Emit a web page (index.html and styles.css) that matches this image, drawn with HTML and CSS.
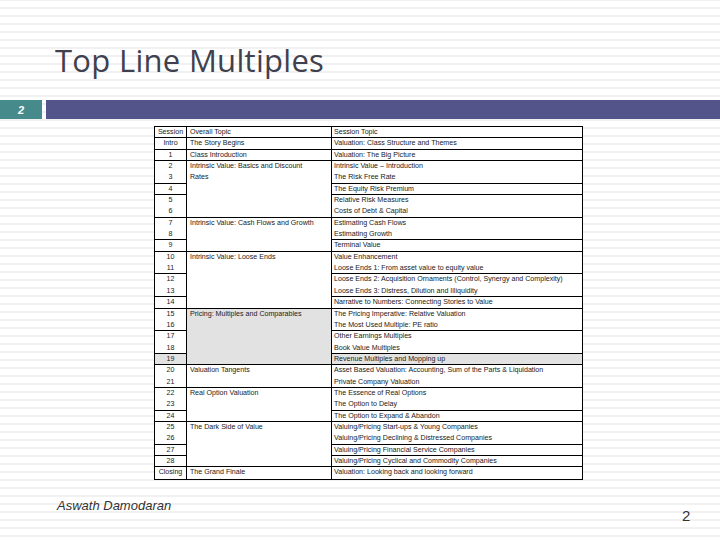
FILE: index.html
```html
<!DOCTYPE html>
<html>
<head>
<meta charset="utf-8">
<link rel="stylesheet" href="styles.css">
</head>
<body>
<div class="slide">
  <header class="title-area">
    <h1 class="title">Top Line Multiples</h1>
  </header>
  <div class="bar">
    <div class="bar-num">2</div>
    <div class="bar-fill"></div>
  </div>
  <div class="table-wrap">
    <div class="grid">
      <div class="c1 b">Session</div><div class="c2 b">Overall Topic</div><div class="c3 b">Session Topic</div>
      <div class="c1 b">Intro</div><div class="c2 b">The Story Begins</div><div class="c3 b">Valuation: Class Structure and Themes</div>
      <div class="c1 b">1</div><div class="c2 b">Class Introduction</div><div class="c3 b">Valuation: The Big Picture</div>
      <div class="c1">2</div><div class="c2 b s5">Intrinsic Value: Basics and Discount<br>Rates</div><div class="c3">Intrinsic Value – Introduction</div>
      <div class="c1 b">3</div><div class="c3 b">The Risk Free Rate</div>
      <div class="c1 b">4</div><div class="c3 b">The Equity Risk Premium</div>
      <div class="c1">5</div><div class="c3">Relative Risk Measures</div>
      <div class="c1 b">6</div><div class="c3 b">Costs of Debt &amp; Capital</div>
      <div class="c1">7</div><div class="c2 b s3">Intrinsic Value: Cash Flows and Growth</div><div class="c3">Estimating Cash Flows</div>
      <div class="c1 b">8</div><div class="c3 b">Estimating Growth</div>
      <div class="c1 b">9</div><div class="c3 b">Terminal Value</div>
      <div class="c1">10</div><div class="c2 b s5">Intrinsic Value: Loose Ends</div><div class="c3">Value Enhancement</div>
      <div class="c1 b">11</div><div class="c3 b">Loose Ends 1: From asset value to equity value</div>
      <div class="c1">12</div><div class="c3">Loose Ends 2: Acquisition Ornaments (Control, Synergy and Complexity)</div>
      <div class="c1 b">13</div><div class="c3 b">Loose Ends 3: Distress, Dilution and Illiquidity</div>
      <div class="c1 b">14</div><div class="c3 b">Narrative to Numbers: Connecting Stories to Value</div>
      <div class="c1">15</div><div class="c2 b s5 gray">Pricing: Multiples and Comparables</div><div class="c3">The Pricing Imperative: Relative Valuation</div>
      <div class="c1 b">16</div><div class="c3 b">The Most Used Multiple: PE ratio</div>
      <div class="c1">17</div><div class="c3">Other Earnings Multiples</div>
      <div class="c1 b">18</div><div class="c3 b">Book Value Multiples</div>
      <div class="c1 b gray">19</div><div class="c3 b gray">Revenue Multiples and Mopping up</div>
      <div class="c1">20</div><div class="c2 b s2">Valuation Tangents</div><div class="c3">Asset Based Valuation: Accounting, Sum of the Parts &amp; Liquidation</div>
      <div class="c1 b">21</div><div class="c3 b">Private Company Valuation</div>
      <div class="c1">22</div><div class="c2 b s3">Real Option Valuation</div><div class="c3">The Essence of Real Options</div>
      <div class="c1 b">23</div><div class="c3 b">The Option to Delay</div>
      <div class="c1 b">24</div><div class="c3 b">The Option to Expand &amp; Abandon</div>
      <div class="c1">25</div><div class="c2 b s4">The Dark Side of Value</div><div class="c3">Valuing/Pricing Start-ups &amp; Young Companies</div>
      <div class="c1 b">26</div><div class="c3 b">Valuing/Pricing Declining &amp; Distressed Companies</div>
      <div class="c1 b">27</div><div class="c3 b">Valuing/Pricing Financial Service Companies</div>
      <div class="c1 b">28</div><div class="c3 b">Valuing/Pricing Cyclical and Commodity Companies</div>
      <div class="c1">Closing</div><div class="c2">The Grand Finale</div><div class="c3">Valuation: Looking back and looking forward</div>
    </div>
  </div>
  <footer class="footer">
    <span class="author">Aswath Damodaran</span>
    <span class="page">2</span>
  </footer>
</div>
</body>
</html>
```

FILE: styles.css
```css
html, body {
  margin: 0;
  padding: 0;
}
body {
  width: 720px;
  height: 540px;
  overflow: hidden;
  background-color: #ffffff;
  background-image: linear-gradient(to bottom, #f1f1f1 0px, #f1f1f1 1px, #ffffff 1px, #ffffff 7px, #f1f1f1 7px, #f1f1f1 8px);
  background-size: 100% 8px;
}
.slide {
  width: 720px;
  height: 540px;
  display: flex;
  flex-direction: column;
}
.title-area {
  height: 100px;
  display: flex;
  align-items: flex-end;
  padding-left: 55px;
  box-sizing: border-box;
}
.title {
  margin: 0 0 22px 0;
  font-family: "Open Sans", "Liberation Sans", sans-serif;
  font-weight: 400;
  font-size: 31px;
  line-height: 36px;
  color: #40404f;
  letter-spacing: 0.3px;
}
.bar {
  display: flex;
  height: 19px;
  gap: 4px;
}
.bar-num {
  width: 42px;
  background: #478a8b;
  color: #ffffff;
  font-family: "Liberation Sans", sans-serif;
  font-size: 11px;
  font-weight: bold;
  font-style: italic;
  display: flex;
  align-items: center;
  justify-content: center;
}
.bar-fill {
  flex: 1;
  background: #535489;
}
.table-wrap {
  margin-top: 7px;
  margin-left: 154px;
  width: 429px;
  background: #ffffff;
  border: 1px solid #000;
  box-sizing: border-box;
}
.grid {
  display: grid;
  grid-template-columns: 31px 145px 251px;
  grid-auto-rows: 11.35px;
  font-family: "Liberation Sans", sans-serif;
  font-size: 7.1px;
  line-height: 11px;
  color: #1a1a1a;
}
.grid > div {
  box-sizing: border-box;
  white-space: nowrap;
  overflow: hidden;
}
.c1 {
  grid-column: 1;
  text-align: center;
}
.c2 {
  grid-column: 2;
  border-left: 1px solid #000;
  padding-left: 3px;
  white-space: normal !important;
}
.c3 {
  grid-column: 3;
  border-left: 1px solid #000;
  padding-left: 2px;
}
.b {
  border-bottom: 1px solid #000;
}
.s2 { grid-row: span 2; }
.s3 { grid-row: span 3; }
.s4 { grid-row: span 4; }
.s5 { grid-row: span 5; }
.gray {
  background: #e2e2e2;
}
.footer {
  position: relative;
  flex: 1;
}
.author {
  position: absolute;
  left: 57px;
  top: 18px;
  font-family: "Liberation Sans", sans-serif;
  font-style: italic;
  font-size: 13px;
  color: #333;
}
.page {
  position: absolute;
  left: 682px;
  top: 27px;
  font-family: "Liberation Sans", sans-serif;
  font-size: 15px;
  color: #333;
}
```
